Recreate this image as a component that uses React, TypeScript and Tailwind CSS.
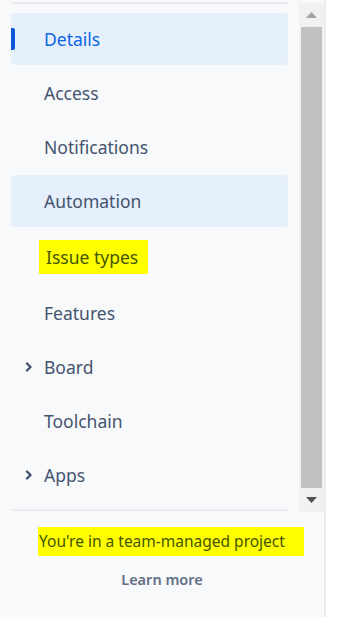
import * as React from 'react'

type NavItem = {
  label: string
  selected?: boolean
  hovered?: boolean
  expandable?: boolean
  marked?: boolean
}

const items: NavItem[] = [
  { label: 'Details', selected: true },
  { label: 'Access' },
  { label: 'Notifications' },
  { label: 'Automation', hovered: true },
  { label: 'Issue types', marked: true },
  { label: 'Features' },
  { label: 'Board', expandable: true },
  { label: 'Toolchain' },
  { label: 'Apps', expandable: true },
]

function Chevron() {
  return (
    <svg width="8" height="10" viewBox="0 0 8 10" className="text-[#44546f]">
      <path
        d="M2 1.5 L5.5 5 L2 8.5"
        fill="none"
        stroke="currentColor"
        strokeWidth="2.4"
        strokeLinecap="round"
        strokeLinejoin="round"
      />
    </svg>
  )
}

function Row({ item }: { item: NavItem }) {
  const bg = item.selected || item.hovered ? 'bg-[#e6effc]' : ''
  return (
    <div className={`relative h-[54px] ${item.marked ? 'mt-[4px]' : ''}`}>
      <div className={`absolute inset-x-0 top-[1px] bottom-[1px] rounded-[4px] ${bg}`}></div>
      {item.selected && (
        <div className="absolute left-0 top-[16px] h-[22px] w-[4px] rounded-r-[2px] bg-[#0c5ad8]"></div>
      )}
      <div className="relative flex h-full items-center">
        <div className="flex w-[33px] justify-end pr-[11px]">
          {item.expandable && <Chevron />}
        </div>
        {item.marked ? (
          <span className="-ml-[5px] -mt-[4px] bg-[#ffff00] pl-[7px] pr-[10px] py-[4px] text-[17.5px] text-[#445400]">
            {item.label}
          </span>
        ) : (
          <span
            className={`text-[17.5px] ${item.selected ? 'text-[#0c66e4]' : 'text-[#44546f]'}`}
          >
            {item.label}
          </span>
        )}
      </div>
    </div>
  )
}

function Scrollbar() {
  return (
    <div className="mt-[3px] flex h-[509px] w-[25px] flex-col bg-[#f1f1f1]">
      <div className="flex h-[24px] items-center justify-center">
        <svg width="11" height="6" viewBox="0 0 11 6">
          <path d="M5.5 0 L11 6 L0 6 Z" fill="#a3a3a3" />
        </svg>
      </div>
      <div className="mx-[2px] flex-1 bg-[#c1c1c1]"></div>
      <div className="flex h-[24px] items-center justify-center">
        <svg width="11" height="6" viewBox="0 0 11 6">
          <path d="M0 0 L11 0 L5.5 6 Z" fill="#505050" />
        </svg>
      </div>
    </div>
  )
}

export default function App() {
  return (
    <div
      className="flex h-[617px] w-full bg-white"
      style={{ fontFamily: '"Noto Sans", "Open Sans", sans-serif' }}
    >
      <div className="flex w-[324px] flex-col bg-[#f8f9fb]">
        <div className="flex">
          <div className="w-[299px] px-[11px]">
            <div className="mt-[2px] h-[2px] bg-[#ebecf0]"></div>
            <nav className="mt-[8px] flex flex-col">
              {items.map(item => (
                <Row item={item} key={item.label} />
              ))}
            </nav>
          </div>
          <Scrollbar />
        </div>
        <div className="mx-[11px] mt-[-3px] h-[2px] w-[277px] bg-[#ebecf0]"></div>
        <div className="flex flex-col items-center pt-[16px]">
          <span className="bg-[#ffff00] py-[3px] pl-[1px] pr-[19px] text-[15.5px] text-[#445400] -mr-[18px]">
            You're in a team-managed project
          </span>
          <a className="mt-[13px] text-[14.5px] font-semibold text-[#626f86]">Learn more</a>
        </div>
      </div>
      <div className="w-[2px] bg-[#ececec]"></div>
      <div className="flex-1 bg-white"></div>
    </div>
  )
}
